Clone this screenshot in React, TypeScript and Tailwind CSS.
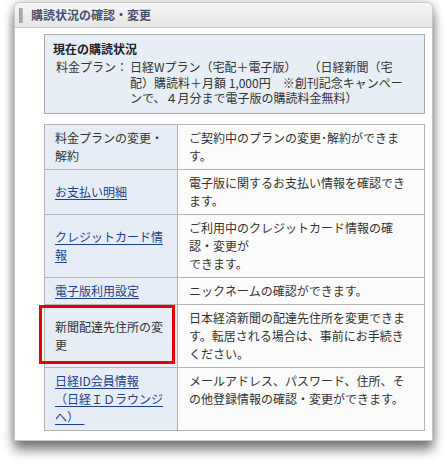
import React from 'react'

type Row = {
  label: React.ReactNode
  link?: boolean
  text: React.ReactNode
  marked?: boolean
}

const rows: Row[] = [
  {
    label: (
      <>
        料金プランの変更・
        <br />
        解約
      </>
    ),
    text: (
      <>
        ご契約中のプランの変更･解約ができま
        <br />
        す。
      </>
    )
  },
  {
    label: 'お支払い明細',
    link: true,
    text: (
      <>
        電子版に関するお支払い情報を確認でき
        <br />
        ます。
      </>
    )
  },
  {
    label: (
      <>
        クレジットカード情
        <br />
        報
      </>
    ),
    link: true,
    text: (
      <>
        ご利用中のクレジットカード情報の確
        <br />
        認・変更が
        <br />
        できます。
      </>
    )
  },
  { label: '電子版利用設定', link: true, text: 'ニックネームの確認ができます。' },
  {
    label: (
      <>
        新聞配達先住所の変
        <br />
        更
      </>
    ),
    marked: true,
    text: (
      <>
        日本経済新聞の配達先住所を変更できま
        <br />
        す。転居される場合は、事前にお手続き
        <br />
        ください。
      </>
    )
  },
  {
    label: (
      <>
        日経ID会員情報
        <br />
        （日経ＩＤラウンジ
        <br />
        へ）{'\u00a0\u00a0'}
      </>
    ),
    link: true,
    text: (
      <>
        メールアドレス、パスワード、住所、そ
        <br />
        の他登録情報の確認・変更ができます。
      </>
    )
  }
]

export default function App() {
  return (
    <div className="w-[447px] h-[464px] bg-white pt-[2px] pl-[14px] font-['Noto_Sans_CJK_JP',sans-serif] text-[#333]">
      <div className="w-[419px] h-[439px] bg-white rounded-t-[6px] border border-[#c9c9c9] shadow-[0_9px_12px_rgba(0,0,0,0.5),0_0_8px_rgba(0,0,0,0.22)] overflow-visible">
        <div className="h-[25px] flex items-center gap-[8px] pl-[4px] rounded-t-[6px] bg-gradient-to-b from-[#f6f6f6] to-[#e6e6e6] border-b border-[#c4c4c4]">
          <div className="w-[4px] h-[15px] bg-gradient-to-r from-[#9a9a9a] to-[#bdbdbd]" />
          <div className="text-[12px] font-bold text-[#48506e] leading-none">購読状況の確認・変更</div>
        </div>

        <div className="pl-[29px] pr-[7px] pt-[6px]">
          <div className="border border-[#a9a9a9] bg-[#e8eef6] pl-[8px] pr-[1px] pt-[5px] pb-[7px] text-[12px]">
            <div className="font-bold leading-[17px] text-[#222]">現在の購読状況</div>
            <div className="flex mt-[2px] leading-[15.5px]">
              <div className="w-[77px] shrink-0 pl-[3px]">料金プラン：</div>
              <div>
                日経Wプラン（宅配＋電子版）　　（日経新聞（宅
                <br />
                配）購読料＋月額 1,000円　※創刊記念キャンペー
                <br />
                ンで、４月分まで電子版の購読料金無料）
              </div>
            </div>
          </div>

          <div className="mt-[10px] grid grid-cols-[133px_1fr] border-t border-l border-[#b3b3b3] text-[12px] leading-[18px]">
            {rows.map((row, i) => (
              <React.Fragment key={i}>
                <div className="relative flex items-center bg-[#e6edf6] border-r border-b border-[#b3b3b3] pl-[10px] pr-[4px] py-[4px]">
                  {row.link ? (
                    <a href="#" className="text-[#1d3f8e] underline underline-offset-2">
                      {row.label}
                    </a>
                  ) : (
                    <span>{row.label}</span>
                  )}
                  {row.marked && (
                    <div className="absolute left-[-6px] top-0 w-[136px] h-[59px] border-[3px] border-[#e80000]" />
                  )}
                </div>
                <div className="bg-[#fbfbfb] border-r border-b border-[#b3b3b3] pl-[11px] pr-[4px] py-[4px]">
                  {row.text}
                </div>
              </React.Fragment>
            ))}
          </div>
        </div>
      </div>
    </div>
  )
}
